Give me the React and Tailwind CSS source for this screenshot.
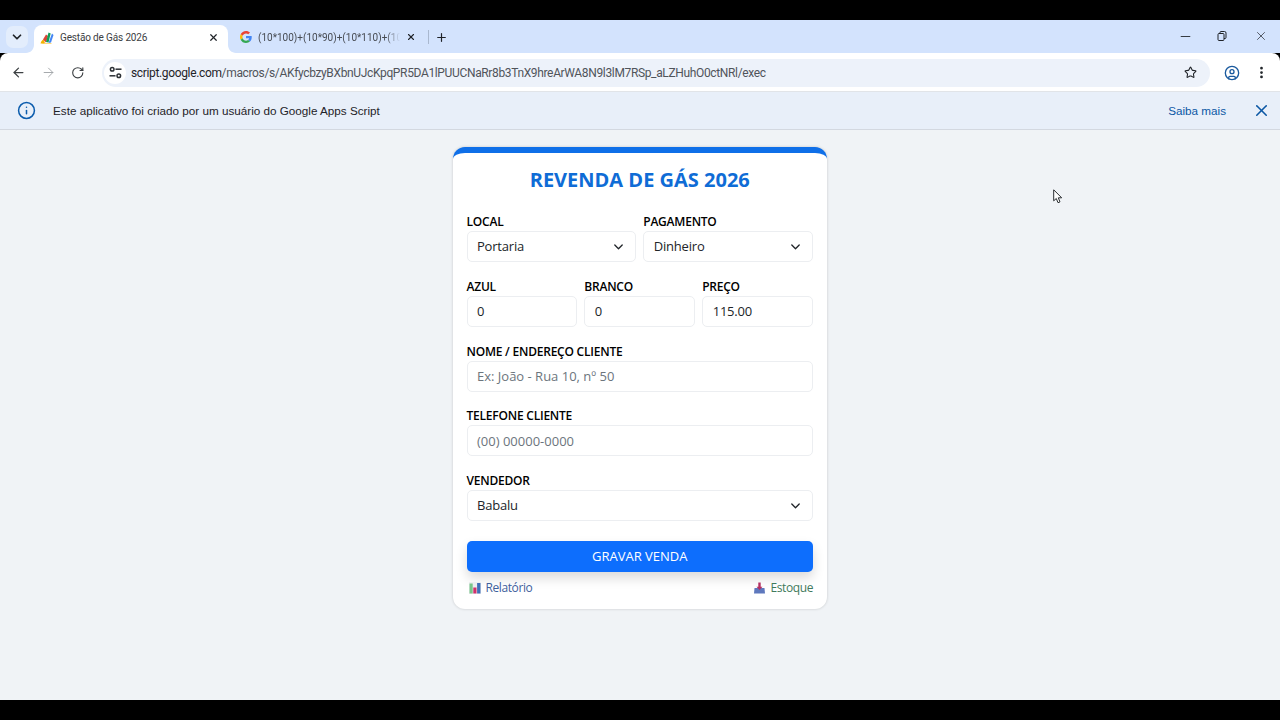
import React from "react";
import { ChevronDown, ArrowLeft, ArrowRight, RotateCw, X, Plus, Minus, Star, CircleUser, EllipsisVertical, Info } from "lucide-react";

const Chev = ({ className = "" }) => (
  <svg width="9" height="6" viewBox="0 0 9 6" fill="none" stroke="#1f2328" strokeWidth="1.3" strokeLinecap="round" strokeLinejoin="round" className={className}>
    <path d="M0.800 1l3.700 3.700L8.200 1" />
  </svg>
);

const Label = ({ children }) => (
  <div className="text-[12px] leading-[16px] font-semibold tracking-[-0.22px] text-black h-[16px] whitespace-nowrap">{children}</div>
);

const Field = ({ label, value, placeholder, select, className = "" }) => (
  <div className={`flex flex-col ${className}`}>
    <Label>{label}</Label>
    <div className="mt-[1px] h-[31px] bg-white border border-[#eceef1] rounded-[5px] flex items-center justify-between pl-[9.5px] pr-[12px] text-[13px]">
      <span className={value ? "pt-[1px] text-[#212529] tracking-[-0.2px]" : "pt-[1px] text-[#6c757d]"}>{value || placeholder}</span>
      {select && <Chev />}
    </div>
  </div>
);

const GoogleG = () => (
  <svg width="12" height="12" viewBox="0 0 48 48">
    <path fill="#EA4335" d="M24 9.500c3.500 0 6.700 1.200 9.200 3.600l6.900-6.900C35.900 2.400 30.500 0 24 0 14.600 0 6.500 5.400 2.600 13.200l8 6.200C12.500 13.700 17.800 9.500 24 9.500z" />
    <path fill="#4285F4" d="M46.900 24.500c0-1.600-.1-3.100-.4-4.500H24v9h12.900c-.6 3-2.200 5.500-4.700 7.200l7.700 6c4.500-4.200 7-10.300 7-17.700z" />
    <path fill="#FBBC05" d="M10.500 28.600c-.5-1.500-.8-3-.8-4.600s.3-3.200.8-4.600l-8-6.200C.9 16.500 0 20.100 0 24s.9 7.500 2.600 10.800l7.900-6.200z" />
    <path fill="#34A853" d="M24 48c6.500 0 11.900-2.100 15.900-5.800l-7.700-6c-2.200 1.400-4.900 2.300-8.200 2.300-6.200 0-11.500-4.200-13.400-9.900l-8 6.200C6.500 42.600 14.600 48 24 48z" />
  </svg>
);

const AppsLogo = () => (
  <svg width="14" height="13" viewBox="0 0 14 13">
    <path d="M0.500 12.500c0.500-2 1.500-3.500 3-4l1.500 3.500-2 0.500z" fill="#f4b400" />
    <path d="M3 8.500L6 3.500l2 1.500-2 6.500z" fill="#db4437" />
    <path d="M6 11L8.500 1.500l2.200 1L8.500 11.500z" fill="#0f9d58" />
    <path d="M8.500 12l3.500-9.500 1.500 1.500-2.500 7.500z" fill="#4285f4" />
    <path d="M2.500 12.500h9v0.500h-9z" fill="#f4b400" />
  </svg>
);

const Flare = ({ side, fill }) => (
  <svg width="8" height="8" viewBox="0 0 8 8" className={`absolute bottom-0 ${side === "l" ? "left-[-8px]" : "right-[-8px]"}`}>
    <path d={side === "l" ? "M8 0v8H0c4.400 0 8-3.600 8-8z" : "M0 0v8h8C3.600 8 0 4.400 0 0z"} fill={fill} />
  </svg>
);

const SiteIcon = () => (
  <svg width="13" height="13" viewBox="0 0 13 13" fill="none" stroke="#2c3035" strokeWidth="1.500">
    <circle cx="3.200" cy="3.200" r="1.800" />
    <path d="M6.500 3.200H12.500" />
    <circle cx="9.800" cy="9.800" r="1.800" />
    <path d="M0.500 9.800H6.500" />
  </svg>
);

const BarChartEmoji = () => (
  <svg width="12" height="12" viewBox="0 0 12 12">
    <rect width="12" height="12" fill="#eceef0" />
    <rect x="0.500" y="1.500" width="3.200" height="10" fill="#79c58a" />
    <rect x="4.300" y="5.500" width="3.200" height="6" fill="#d1306b" />
    <rect x="8.100" y="1" width="3.400" height="10.500" fill="#3f6fb8" />
  </svg>
);

const BoxEmoji = () => (
  <svg width="11" height="12" viewBox="0 0 11 12">
    <path d="M0.500 6h10l0.500 5.500H0z" fill="#5e78bd" />
    <path d="M5.500 8L2.500 4.800h1.800V0.500h2.400V4.800h1.800z" fill="#b42f62" />
  </svg>
);

const Cursor = () => (
  <svg width="10" height="15" viewBox="0 0 10 15" className="absolute left-[1053px] top-[189px]">
    <path d="M0.700 0.800v11l2.600-2.300 1.700 4.200 2-0.800-1.700-4.100h3.400z" fill="#ffffff" stroke="#2a2d30" strokeWidth="1" strokeLinejoin="round" />
  </svg>
);

export default function App() {
  return (
    <div className="relative w-[1280px] h-[720px] flex flex-col bg-black overflow-hidden font-['Liberation_Sans',sans-serif]">
      <div className="h-[20px] shrink-0 bg-black" />

      {/* tab strip */}
      <div className="h-[33px] shrink-0 bg-[#d3e3fd] flex items-end pl-[6px]">
        <div className="self-center w-[22px] h-[22px] mt-[1px] rounded-[7px] bg-[#e3edfc] flex items-center justify-center">
          <ChevronDown size={14} strokeWidth={3} color="#1f2328" />
        </div>
        <div className="relative ml-[6px] w-[194px] h-[28px] bg-white rounded-t-[8px] flex items-center pl-[6px] pr-[9px] pb-[4px] font-['Roboto',sans-serif]">
          <Flare side="l" fill="#ffffff" />
          <Flare side="r" fill="#ffffff" />
          <AppsLogo />
          <span className="ml-[6px] pt-[1px] text-[10px] tracking-[-0.15px] text-[#3c4043] flex-1 whitespace-nowrap">Gestão de Gás 2026</span>
          <X size={11} strokeWidth={2.6} color="#1f2328" />
        </div>
        <div className="h-[28px] pb-[4px] ml-[12px] w-[180px] flex items-center">
          <GoogleG />
          <span className="ml-[6px] pt-[1px] w-[142px] text-[10px] text-[#474b52] whitespace-nowrap font-['Roboto',sans-serif] [mask-image:linear-gradient(to_right,black_90%,transparent)]">(10*100)+(10*90)+(10*110)+(10</span>
          <X size={10} strokeWidth={2.6} color="#1f2328" className="ml-[6px]" />
        </div>
        <div className="w-[1px] h-[14px] bg-[#a9b8cf] ml-[8px] mb-[9px]" />
        <div className="h-[28px] pb-[4px] ml-[6px] flex items-center">
          <Plus size={13} strokeWidth={2.2} color="#1f2328" />
        </div>
        <div className="flex-1" />
        <div className="h-[28px] pb-[6px] flex items-center text-[#1f2328]">
          <Minus size={15} strokeWidth={1.4} />
          <svg width="10" height="10" viewBox="0 0 10 10" fill="none" stroke="#1f2328" strokeWidth="1" className="ml-[24.5px]">
            <rect x="1" y="2.500" width="6" height="7" rx="1" />
            <path d="M3 2.500V1.500a1 1 0 0 1 1-1h3.500a1.500 1.500 0 0 1 1.500 1.500v4.500a1 1 0 0 1-1 1H7" />
          </svg>
          <X size={14} strokeWidth={1.2} className="ml-[27px] mr-[12px]" />
        </div>
      </div>

      {/* toolbar */}
      <div className="h-[39px] shrink-0 bg-white rounded-t-[8px] flex items-center pl-[10.5px] pr-[11px] pt-[1px] border-b border-[#e1e4e8]">
        <ArrowLeft size={15} strokeWidth={2} color="#3c4043" />
        <ArrowRight size={15} strokeWidth={1.5} color="#a0a4a8" className="ml-[15px]" />
        <RotateCw size={13.5} strokeWidth={2} color="#3c4043" className="ml-[15.75px]" />
        <div className="ml-[17.25px] h-[28px] w-[1108px] bg-[#edf2fa] rounded-full flex items-center pl-[2px] pr-[13px]">
          <div className="w-[22px] h-[22px] rounded-full bg-white flex items-center justify-center">
            <SiteIcon />
          </div>
          <span className="ml-[5px] text-[12px] tracking-[-0.35px] whitespace-nowrap font-['Roboto',sans-serif] flex-1">
            <span className="text-[#1f2328]">script.google.com</span>
            <span className="text-[#50545a]">/macros/s/AKfycbzyBXbnUJcKpqPR5DA1lPUUCNaRr8b3TnX9hreArWA8N9l3lM7RSp_aLZHuhO0ctNRl/exec</span>
          </span>
          <Star size={13} strokeWidth={2} color="#1f2328" />
        </div>
        <CircleUser size={16} strokeWidth={2} color="#1a5a9e" className="ml-[14px]" />
        <EllipsisVertical size={15} strokeWidth={2.4} color="#1f2328" className="ml-[14px]" />
      </div>

      {/* info bar */}
      <div className="h-[38px] shrink-0 bg-[#e8eff9] border-b border-[#d3d8e0] flex items-center pl-[17px] pr-[9px]">
        <Info size={19} strokeWidth={1.9} color="#0b5cad" />
        <span className="ml-[17px] text-[11.7px] text-[#1f2328] flex-1">Este aplicativo foi criado por um usuário do Google Apps Script</span>
        <span className="text-[11.7px] text-[#0b57a4]">Saiba mais</span>
        <X size={19} strokeWidth={2} color="#0b57a4" className="ml-[26px]" />
      </div>

      {/* page */}
      <div className="h-[570px] shrink-0 bg-[#f0f3f6] pt-[17px] font-['Open_Sans',sans-serif]">
        <div className="mx-auto w-[374px] h-[462px] bg-white rounded-[12px] border-t-[6px] border-t-[#0f6fe8] shadow-[0_0_3px_rgba(0,0,0,0.18)] pl-[13.5px] pr-[14px]">
          <h1 className="text-[20px] leading-[26px] font-bold text-[#0f6cd6] text-center mt-[14px] mb-[21px]">REVENDA DE GÁS 2026</h1>

          <div className="flex gap-[7px]">
            <Field className="flex-1" label="LOCAL" value="Portaria" select />
            <Field className="flex-1" label="PAGAMENTO" value="Dinheiro" select />
          </div>

          <div className="flex gap-[7px] mt-[16.75px]">
            <Field className="flex-1" label="AZUL" value="0" />
            <Field className="flex-1" label="BRANCO" value="0" />
            <Field className="flex-1" label="PREÇO" value="115.00" />
          </div>

          <Field className="mt-[16.75px]" label="NOME / ENDEREÇO CLIENTE" placeholder="Ex: João - Rua 10, nº 50" />
          <Field className="mt-[16.75px]" label="TELEFONE CLIENTE" placeholder="(00) 00000-0000" />
          <Field className="mt-[16.75px]" label="VENDEDOR" value="Babalu" select />

          <button className="mt-[20px] w-full h-[31px] pt-[1px] bg-[#0d6efd] text-white text-[13px] rounded-[5px] shadow-[0_6px_12px_rgba(0,0,0,0.15)] flex items-center justify-center">
            GRAVAR VENDA
          </button>

          <div className="mt-[8px] flex items-center justify-between text-[12px] leading-[16px]">
            <span className="flex items-center pl-[2px] text-[#3f5f9c]">
              <BarChartEmoji />
              <span className="ml-[5px] tracking-[-0.4px]">Relatório</span>
            </span>
            <span className="flex items-center text-[#3f7a5c]">
              <BoxEmoji />
              <span className="ml-[5px] tracking-[-0.4px]">Estoque</span>
            </span>
          </div>
        </div>
      </div>

      <div className="flex-1 bg-black" />
      <Cursor />
    </div>
  );
}
